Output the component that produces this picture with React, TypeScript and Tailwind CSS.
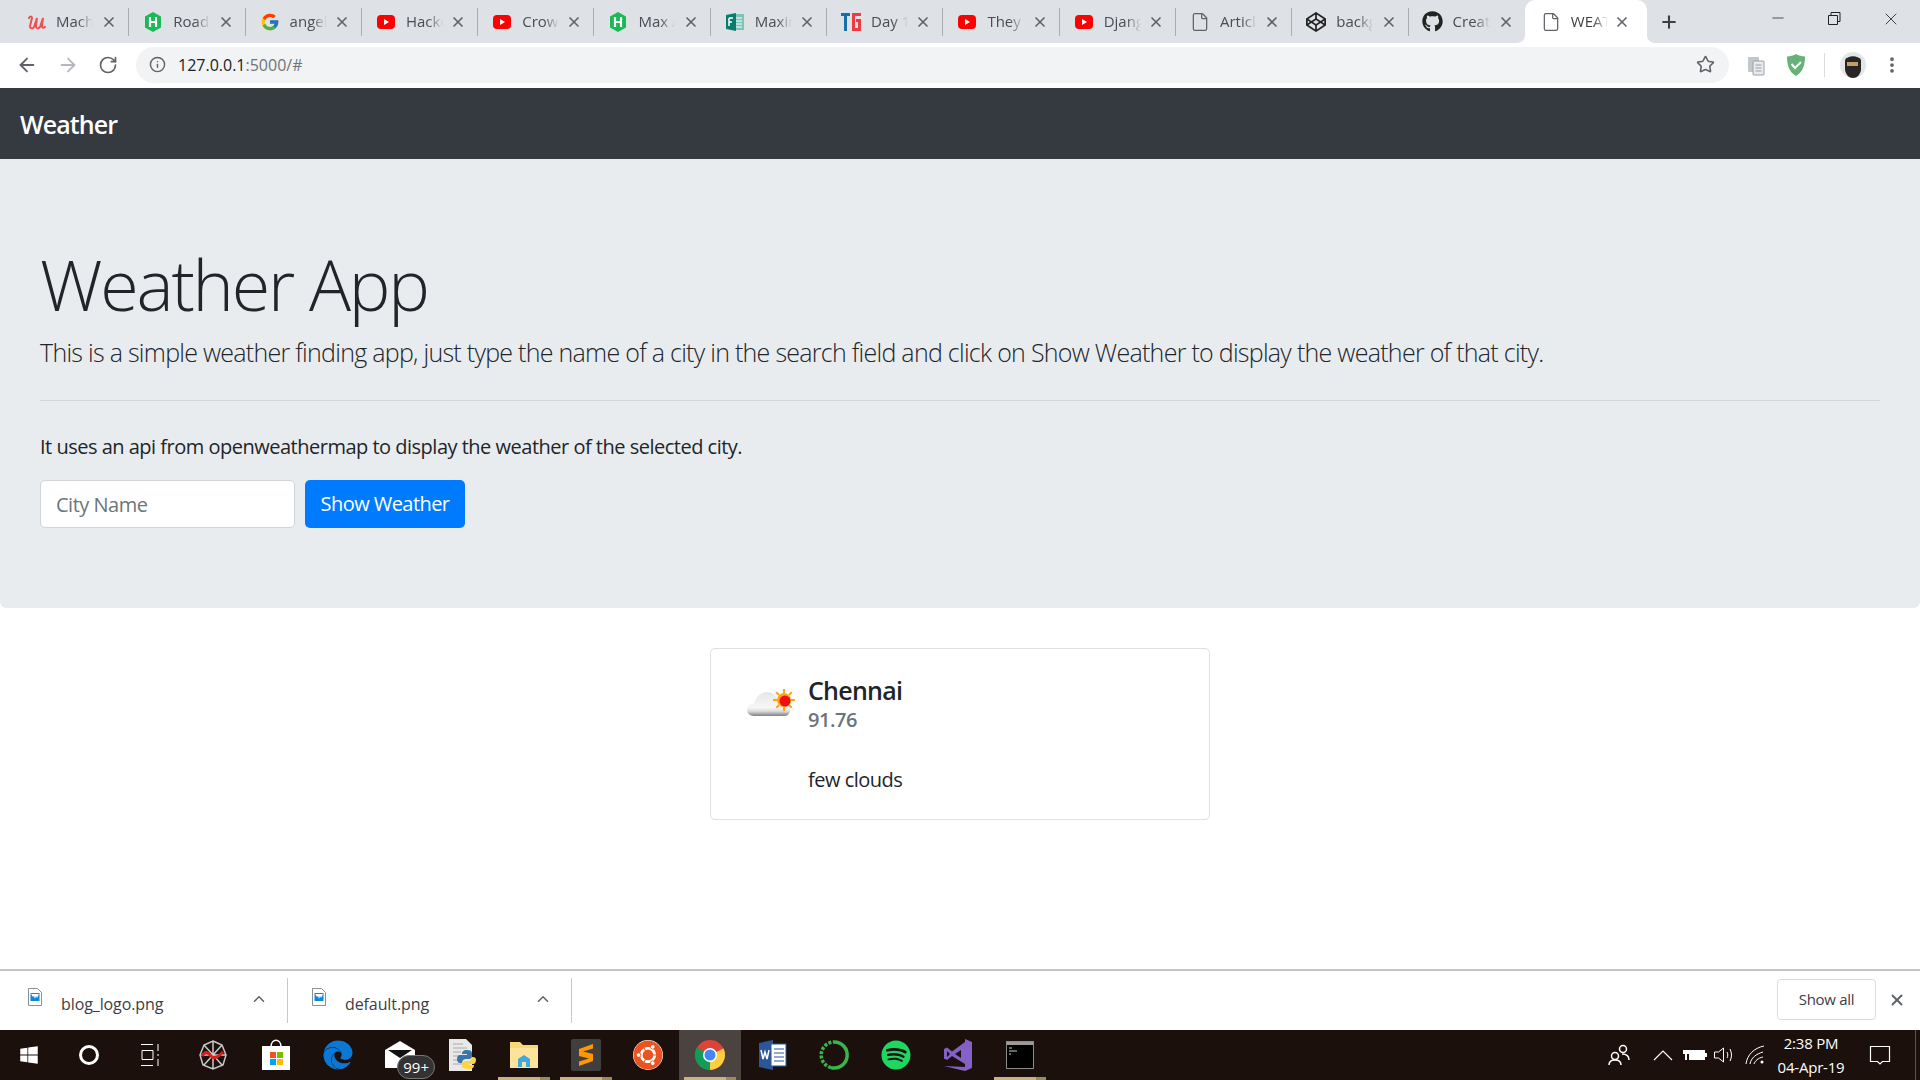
import { ArrowLeft, ArrowRight, ChevronUp, File, Info, Minus, MoreVertical, Plus, RotateCw, Star, X } from 'lucide-react';
import { FaCodepen, FaEdge, FaGithub, FaSpotify, FaUbuntu, FaWindows } from 'react-icons/fa';
import { FcGoogle } from 'react-icons/fc';
import type { ReactNode } from 'react';

const FONT = "font-['Open_Sans',sans-serif]";

function YouTubeIcon() {
  return (
    <svg width="20" height="20" viewBox="0 0 20 20">
      <rect x="1" y="3" width="18" height="14" rx="4" fill="#f00" />
      <path d="M8 7l5 3-5 3z" fill="#fff" />
    </svg>
  );
}

function HackerIcon() {
  return (
    <svg width="20" height="20" viewBox="0 0 20 20">
      <path d="M10 0l8 4.500v11L10 20l-8-4.500v-11z" fill="#19b955" />
      <path d="M7 5v10M13 5v10M7 10h6" stroke="#fff" strokeWidth="2.200" fill="none" />
    </svg>
  );
}

function UdemyIcon() {
  return (
    <svg width="20" height="20" viewBox="0 0 20 20">
      <path d="M3 6c1-2 3-2 3 0L4 14c0 3 3 3 4 1l3-9-1 8c0 3 2 3 4 1l3-9-1 8c0 2 1 2 3 1" stroke="#ec5252" strokeWidth="2" fill="none" strokeLinecap="round" />
    </svg>
  );
}

function FormsIcon() {
  return (
    <svg width="20" height="20" viewBox="0 0 20 20">
      <rect x="8" y="2" width="11" height="16" fill="#7fc4b8" />
      <path d="M11 6h6M11 9h6M11 12h6M11 15h6" stroke="#fff" strokeWidth="1" />
      <path d="M1 3l10-2v18L1 17z" fill="#0a7d6c" />
      <path d="M4 6h4M4 6v8M4 10h3" stroke="#fff" strokeWidth="1.500" fill="none" />
    </svg>
  );
}

function TgIcon() {
  return (
    <svg width="22" height="22" viewBox="0 0 22 22">
      <path d="M1 2h9v3H7v15H4V5H1z" fill="#156fa8" />
      <path d="M12 2h9v3h-6v12h3v-6h-2V8h5v12h-9z" fill="#ef3a42" />
    </svg>
  );
}

function PageIcon() {
  return <File size={20} strokeWidth={1.500} className="text-[#5f6368]" />;
}

const tabs: { title: string; icon: ReactNode }[] = [
  { title: 'Machine', icon: <UdemyIcon /> },
  { title: 'Roadside', icon: <HackerIcon /> },
  { title: 'angel', icon: <FcGoogle size={20} /> },
  { title: 'Hacker', icon: <YouTubeIcon /> },
  { title: 'Crowd', icon: <YouTubeIcon /> },
  { title: 'Max A', icon: <HackerIcon /> },
  { title: 'Maximum', icon: <FormsIcon /> },
  { title: 'Day 1', icon: <TgIcon /> },
  { title: 'They', icon: <YouTubeIcon /> },
  { title: 'Django', icon: <YouTubeIcon /> },
  { title: 'Article', icon: <PageIcon /> },
  { title: 'backg', icon: <FaCodepen size={20} className="text-[#222]" /> },
  { title: 'Create', icon: <FaGithub size={21} className="text-[#222]" /> },
];

function Tab({ title, icon, showDivider, first }: { title: string; icon: ReactNode; showDivider: boolean; first: boolean }) {
  return (
    <div className={`flex h-[28px] w-[116.300px] shrink-0 items-center pr-[11px] ${first ? 'pl-[12px]' : 'pl-[13px]'} ${showDivider ? 'border-r border-[#a9adb2]' : ''}`}>
      <span className="flex w-[22px] shrink-0 justify-center">{icon}</span>
      <span className="ml-[9px] w-[37px] overflow-hidden whitespace-nowrap text-[15px] text-[#4a4d51] [mask-image:linear-gradient(to_right,black_60%,transparent)]">
        {title}
      </span>
      <X size={16} strokeWidth={2.500} className="ml-auto text-[#5f6368]" />
    </div>
  );
}

function TabStrip() {
  return (
    <div className="flex h-[43px] shrink-0 items-start bg-[#dee1e6] pl-[13px]">
      <div className="flex h-[43px] items-center">
        {tabs.map((tab, i) => (
          <Tab key={i} title={tab.title} icon={tab.icon} showDivider={i < tabs.length - 1} first={i === 0} />
        ))}
      </div>
      <div className="relative flex h-[43px] w-[122px] shrink-0 items-center rounded-t-[10px] bg-white pl-[15px] pr-[17px]">
        <svg width="8" height="8" viewBox="0 0 8 8" className="absolute -left-[8px] bottom-0">
          <path d="M8 0v8H0c4 0 8-3 8-8z" fill="#fff" />
        </svg>
        <svg width="8" height="8" viewBox="0 0 8 8" className="absolute -right-[8px] bottom-0">
          <path d="M0 0v8h8C4 8 0 5 0 0z" fill="#fff" />
        </svg>
        <span className="flex w-[22px] shrink-0 justify-center"><PageIcon /></span>
        <span className="ml-[9px] w-[37px] overflow-hidden whitespace-nowrap text-[15px] text-[#3c4043] [mask-image:linear-gradient(to_right,black_60%,transparent)]">
          WEATHER
        </span>
        <X size={16} strokeWidth={2.500} className="ml-auto text-[#5f6368]" />
      </div>
      <div className="flex h-[43px] w-[45px] items-center justify-center">
        <Plus size={20} strokeWidth={2.500} className="text-[#3c4043]" />
      </div>
      <div className="ml-auto flex h-[43px] items-start pr-[1px] pt-[9px] text-[#222]">
        <span className="flex w-[56px] justify-center"><Minus size={18} strokeWidth={1} /></span>
        <span className="mr-[1px] flex w-[56px] justify-center">
          <svg width="18" height="18" viewBox="0 0 18 18" fill="none" stroke="currentColor">
            <path d="M3.500 6.500h9v9h-9zM6 6.500v-3h9v9h-2.500" />
          </svg>
        </span>
        <span className="flex w-[56px] justify-center"><X size={20} strokeWidth={1} /></span>
      </div>
    </div>
  );
}

function Toolbar() {
  return (
    <div className="flex h-[45px] shrink-0 items-center bg-white pb-[2px] pl-[16px] text-[#5f6368]">
      <ArrowLeft size={22} strokeWidth={2} />
      <ArrowRight size={22} strokeWidth={2} className="ml-[19px] text-[#b5b8bc]" />
      <RotateCw size={20} strokeWidth={2} className="ml-[19px]" />
      <div className="ml-[18px] flex h-[36px] w-[1593px] items-center rounded-full bg-[#f1f3f4] pl-[13px] pr-[14px]">
        <Info size={17} strokeWidth={2} />
        <span className="ml-[12px] text-[16px] text-[#202124]">
          127.0.0.1<span className="text-[#70757a]">:5000/#</span>
        </span>
        <Star size={19} strokeWidth={2} className="ml-auto" />
      </div>
      <svg width="20" height="22" viewBox="0 0 20 22" className="ml-[17px]" fill="none">
        <rect x="2" y="3" width="11" height="15" rx="1" fill="#c4c7ca" />
        <rect x="7" y="7" width="11" height="14" rx="1" fill="#e8eaed" stroke="#9aa0a6" />
        <path d="M9.500 11h6M9.500 14h6M9.500 17h6" stroke="#9aa0a6" />
      </svg>
      <svg width="20" height="24" viewBox="0 0 20 24" className="ml-[20px]">
        <path d="M10 1c3 2 6 2 9 2.500C19 12 17 19 10 23 3 19 1 12 1 3.500 4 3 7 3 10 1z" fill="#67b279" />
        <path d="M5.500 11l3.500 4 6-6" stroke="#fff" strokeWidth="2" fill="none" />
      </svg>
      <div className="ml-[18px] h-[24px] w-px bg-[#dadce0]" />
      <svg width="26" height="26" viewBox="0 0 26 26" className="ml-[15px]">
        <circle cx="13" cy="13" r="13" fill="#e4e5e6" />
        <path d="M5 8c3-5 13-5 16 0v10c-1 5-4 8-8 8s-7-3-8-8z" fill="#262626" />
        <rect x="7" y="10" width="11" height="4" fill="#c69c6d" />
      </svg>
      <MoreVertical size={20} strokeWidth={2.500} className="ml-[16px]" />
    </div>
  );
}

function CloudIcon() {
  return (
    <svg width="50" height="34" viewBox="0 0 50 34" className="shrink-0">
      <defs>
        <linearGradient id="cloud-fill" x1="0" y1="0" x2="0" y2="1">
          <stop offset="0" stopColor="#e6e6e6" />
          <stop offset="0.650" stopColor="#f7f7f7" />
          <stop offset="0.800" stopColor="#dcdcdc" />
          <stop offset="1" stopColor="#7f7f7f" />
        </linearGradient>
      </defs>
      <path d="M7 31c-4 0-7-3-7-6 0-4 3-7 7-6 1-7 7-12 13-12 6 0 10 4 11 10 6-1 12 2 12 8 0 3-2 6-5 6z" fill="url(#cloud-fill)" />
      <path d="M37 4v22M26 15h22M29.200 7.200l15.600 15.600M44.800 7.200L29.200 22.800" stroke="#ffa412" strokeWidth="2" strokeDasharray="4 14 4" />
      <circle cx="37" cy="15" r="7" fill="#ffa412" />
      <circle cx="38" cy="16" r="5.500" fill="#f01010" />
    </svg>
  );
}

function Navbar() {
  return (
    <nav className="flex h-[71px] shrink-0 items-center bg-[#343a40] px-[20px] pt-[2px]">
      <span className="text-[25px] font-semibold tracking-[-0.900px] text-white">Weather</span>
    </nav>
  );
}

function Hero() {
  return (
    <section className="h-[449px] shrink-0 rounded-b-[6px] bg-[#e9ecef] px-[40px] pt-[78px] text-[#212529]">
      <h1 className="text-[70px] font-light leading-[94px] tracking-[-2.200px]">Weather App</h1>
      <p className="mt-[3px] text-[25px] font-light leading-[36px] tracking-[-0.725px]">
        This is a simple weather finding app, just type the name of a city in the search field and click on Show Weather to display the weather of that city.
      </p>
      <hr className="mt-[30px] border-[#d3d5d8]" />
      <p className="mt-[31px] text-[20px] leading-[30px] tracking-[-0.500px]">
        It uses an api from openweathermap to display the weather of the selected city.
      </p>
      <div className="mt-[18px] flex gap-[10px]">
        <input
          placeholder="City Name"
          className="h-[48px] w-[255px] rounded-[5px] border border-[#ced4da] bg-white px-[15px] text-[20px] tracking-[-0.500px] placeholder:text-[#6c757d]"
        />
        <button className="h-[48px] w-[160px] rounded-[5px] bg-[#007bff] text-[20px] tracking-[-0.550px] text-white">
          Show Weather
        </button>
      </div>
    </section>
  );
}

function WeatherCard() {
  return (
    <div className="mx-auto mt-[40px] flex h-[172px] w-[500px] rounded-[5px] border border-[#dfdfdf] bg-white pl-[36px] pt-[23px] text-[#212529]">
      <div className="pt-[13px]"><CloudIcon /></div>
      <div className="ml-[11px]">
        <div className="text-[25px] leading-[36px] tracking-[-0.750px] [font-weight:550]">Chennai</div>
        <div className="text-[20px] leading-[24px] tracking-[-0.450px] text-[#6c757d] [font-weight:550]">91.76</div>
        <div className="mt-[33px] text-[20px] leading-[30px] tracking-[-0.500px]">few clouds</div>
      </div>
    </div>
  );
}

function DownloadItem({ name, className }: { name: string; className: string }) {
  return (
    <div className={`flex h-[45px] items-center border-r border-[#c8c8c8] ${className}`}>
      <svg width="14" height="18" viewBox="0 0 14 18" className="-mt-[8px]">
        <path d="M.500.500h9l4 4v13H.500z" fill="#fff" stroke="#8a8f95" />
        <rect x="2.500" y="5" width="9" height="8" fill="#0f86d8" />
        <path d="M3 6h8l-2 4-1-2-1 3-1-3-1 1z" fill="#fff" />
      </svg>
      <span className="ml-[19px] mt-[7px] text-[16px] tracking-[-0.100px] text-[#3c4043]">{name}</span>
      <ChevronUp size={18} strokeWidth={2} className="ml-auto mr-[19px] -mt-[3px] text-[#5f6368]" />
    </div>
  );
}

function DownloadBar() {
  return (
    <div className="flex h-[61px] shrink-0 items-center border-t-2 border-[#c4c4c4] bg-white">
      <DownloadItem name="blog_logo.png" className="w-[288px] pl-[28px]" />
      <DownloadItem name="default.png" className="w-[284px] pl-[24px]" />
      <button className="-mt-[2px] ml-auto flex h-[41px] w-[99px] items-center justify-center rounded-[4px] border border-[#dadce0] text-[15px] tracking-[-0.300px] text-[#3c4043]">
        Show all
      </button>
      <X size={18} strokeWidth={2.500} className="-mt-[2px] ml-[12px] mr-[14px] text-[#5f6368]" />
    </div>
  );
}

function TaskbarSlot({ children, underline, active, className = 'w-[62px]' }: { children: ReactNode; underline?: boolean; active?: boolean; className?: string }) {
  return (
    <div className={`relative flex h-[50px] shrink-0 items-center justify-center ${className} ${active ? 'bg-[#4a4340]' : ''}`}>
      {children}
      {underline && (
        <div className="absolute bottom-0 left-[5px] right-[5px] flex h-[3px]">
          <div className="flex-1 bg-[#c9b27c]" />
          <div className="w-[10px] bg-[#9a8a60]" />
        </div>
      )}
    </div>
  );
}

function Taskbar() {
  return (
    <div className="flex h-[50px] shrink-0 items-center bg-[#1c100c] text-white">
      <TaskbarSlot className="w-[58px]"><FaWindows size={20} /></TaskbarSlot>
      <TaskbarSlot className="w-[62px]"><div className="h-[20px] w-[20px] rounded-full border-[3px] border-white" /></TaskbarSlot>
      <TaskbarSlot className="mr-[3px] w-[59px]">
        <svg width="20" height="24" viewBox="0 0 20 24" fill="none" stroke="#fff">
          <path d="M1 1.500h12M1 22.500h12M2 7.500h11v9H2zM18 1v7M18 16v7M18 11v2" />
        </svg>
      </TaskbarSlot>
      <TaskbarSlot className="mr-[1px] w-[62px]">
        <svg width="30" height="30" viewBox="0 0 30 30" fill="none" stroke="#c9c9c9" strokeWidth="1.500">
          <path d="M15 1l9 4 4 10-3 10-10 4-10-4-3-10 4-10zM15 1v28M2 15h26M6 5l18 20M24 5L6 25" />
          <path d="M4 16c4-6 6-3 9 0s6 2 12-4" stroke="#e01b1b" strokeWidth="3" />
        </svg>
      </TaskbarSlot>
      <TaskbarSlot>
        <svg width="30" height="32" viewBox="0 0 30 32">
          <path d="M10 8c0-9 10-9 10 0" fill="none" stroke="#fff" strokeWidth="1.500" />
          <rect x="1" y="7" width="28" height="24" fill="#fff" />
          <rect x="9" y="13" width="6" height="6" fill="#f25022" />
          <rect x="16" y="13" width="6" height="6" fill="#7fba00" />
          <rect x="9" y="20" width="6" height="6" fill="#00a4ef" />
          <rect x="16" y="20" width="6" height="6" fill="#ffb900" />
        </svg>
      </TaskbarSlot>
      <TaskbarSlot><FaEdge size={30} className="text-[#0a78d4]" /></TaskbarSlot>
      <TaskbarSlot>
        <div className="relative">
          <svg width="30" height="30" viewBox="0 0 30 30">
            <path d="M0 10L15 1l15 9v18H0z" fill="#fff" />
            <path d="M3 10h24l-12 8z" fill="#111" />
          </svg>
          <span className="absolute -bottom-[9px] -right-[20px] rounded-full border border-[#777] bg-[#333] px-[5px] text-[15px] leading-[22px] text-white">
            99+
          </span>
        </div>
      </TaskbarSlot>
      <TaskbarSlot>
        <svg width="28" height="34" viewBox="0 0 28 34">
          <path d="M1 1h17l6 6v26H1z" fill="#e8e8e8" />
          <path d="M5 6h10M5 10h14M5 14h8M5 18h8M5 22h8M5 26h12" stroke="#aaa" />
          <path d="M19 12c-4 0-5 2-5 4h5v1h-7c-2 0-3 2-3 4s1 4 3 4h2c0-3 2-4 4-4h3c2 0 3-1 3-3v-3c0-2-2-3-5-3z" fill="#3776ab" />
          <path d="M21 31c4 0 5-2 5-4h-5v-1h4c2 0 3-2 3-4s-1-3-3-3h-1c0 3-2 4-4 4h-3c-2 0-3 1-3 3v2c0 2 3 3 7 3z" fill="#ffd343" />
        </svg>
      </TaskbarSlot>
      <TaskbarSlot underline>
        <svg width="30" height="28" viewBox="0 0 30 28">
          <path d="M1 1h10l3 3h15v22H1z" fill="#f8d775" />
          <rect x="1" y="7" width="28" height="20" fill="#fbe39a" />
          <path d="M9 26v-8l6-4 6 4v8h-4v-5h-4v5z" fill="#3fa9e0" />
        </svg>
      </TaskbarSlot>
      <TaskbarSlot underline>
        <svg width="30" height="32" viewBox="0 0 30 32">
          <rect width="30" height="32" rx="2" fill="#3f3f3f" />
          <path d="M22 5L8 10v5l14 5v-5L12 12.500l10-3zM8 27l14-5v-5L8 12v5l10 2.500-10 3z" fill="#ff9800" />
        </svg>
      </TaskbarSlot>
      <TaskbarSlot><FaUbuntu size={30} className="rounded-full bg-white text-[#e95420]" /></TaskbarSlot>
      <TaskbarSlot active underline>
        <svg width="30" height="30" viewBox="0 0 30 30">
          <circle cx="15" cy="15" r="15" fill="#db4437" />
          <path d="M15 15L28.500 8.500A15 15 0 0 1 15 30z" fill="#ffcd40" />
          <path d="M15 15v15A15 15 0 0 1 2 7.500z" fill="#0f9d58" />
          <circle cx="15" cy="15" r="7" fill="#fff" />
          <circle cx="15" cy="15" r="5.500" fill="#4285f4" />
        </svg>
      </TaskbarSlot>
      <TaskbarSlot>
        <svg width="30" height="32" viewBox="0 0 30 32">
          <path d="M2 4l14-3v30L2 28z" fill="#2b579a" />
          <rect x="14" y="5" width="15" height="22" fill="#fff" stroke="#2b579a" />
          <path d="M17 10h10M17 14h10M17 18h10M17 22h10" stroke="#2b579a" />
          <path d="M4 11l2 9 2-7 2 7 2-9" stroke="#fff" strokeWidth="1.500" fill="none" />
        </svg>
      </TaskbarSlot>
      <TaskbarSlot>
        <svg width="32" height="32" viewBox="0 0 32 32" fill="none">
          <path d="M16 3a13 13 0 1 1-3 25.600" stroke="#39b54a" strokeWidth="3.500" />
          <path d="M13 28.600A13 13 0 0 1 16 3" stroke="#39b54a" strokeWidth="3.500" strokeDasharray="3 1.500" />
        </svg>
      </TaskbarSlot>
      <TaskbarSlot><FaSpotify size={30} className="text-[#1ed760]" /></TaskbarSlot>
      <TaskbarSlot>
        <svg width="30" height="34" viewBox="0 0 30 34">
          <path d="M22 1l7 3v26l-7 3L1 28l21 1z" fill="#8661c5" />
          <path d="M1 11l3-1.500 5 4L22 4v22L9 18l-5 4-3-1.500zM4 13v6l3-3zM12 16l6 4v-8z" fill="#8661c5" fillRule="evenodd" />
        </svg>
      </TaskbarSlot>
      <TaskbarSlot underline>
        <svg width="28" height="28" viewBox="0 0 28 28">
          <rect x="0.500" y="0.500" width="27" height="27" fill="#000" stroke="#8a8a8a" />
          <rect x="1" y="1" width="26" height="3" fill="#9a9a9a" />
          <path d="M3 7h3M3 10h8M3 13h2" stroke="#ccc" />
        </svg>
      </TaskbarSlot>

      <div className="ml-auto flex h-full items-center">
        <svg width="24" height="24" viewBox="0 0 24 24" fill="none" stroke="#fff" strokeWidth="1.500">
          <circle cx="8" cy="13" r="3.500" />
          <circle cx="16" cy="6" r="3.500" />
          <path d="M2 22c0-3 2-5 6-5s6 2 6 5M15 11c4 0 7 2 7 6" />
        </svg>
        <svg width="20" height="12" viewBox="0 0 20 12" fill="none" stroke="#fff" strokeWidth="1.200" className="ml-[22px]">
          <path d="M1 11l9-9 9 9" />
        </svg>
        <svg width="24" height="14" viewBox="0 0 24 14" className="ml-[10px]">
          <rect x="6" y="2" width="16" height="10" fill="#fff" />
          <rect x="22" y="5" width="2" height="4" fill="#fff" />
          <path d="M0 2h6v4H4v6H2V6H0z" fill="#fff" />
        </svg>
        <svg width="24" height="20" viewBox="0 0 24 20" fill="none" stroke="#fff" className="ml-[6px]">
          <path d="M1.500 7h4l5-4v14l-5-4h-4zM14 7c1 2 1 4 0 6M17 4c2 4 2 8 0 12" />
        </svg>
        <svg width="22" height="20" viewBox="0 0 22 20" fill="none" stroke="#fff" className="ml-[7px]">
          <path d="M2 19C3 10 10 3 20 1M6 19c1-6 6-10 13-12M10 19c1-3 4-6 9-7" />
          <circle cx="18" cy="17" r="1.500" fill="#fff" stroke="none" />
        </svg>
        <div className="ml-[3px] w-[84px] text-center text-[15px] leading-[24px] tracking-[-0.200px]">
          <div>2:38 PM</div>
          <div>04-Apr-19</div>
        </div>
        <svg width="22" height="22" viewBox="0 0 22 22" fill="none" stroke="#fff" strokeWidth="1.200" className="ml-[16px] mr-[24px]">
          <path d="M1.500 2.500h19v15h-7l-2.500 2.500-2.500-2.500h-7z" />
        </svg>
        <div className="h-full w-[5px] border-l border-[#5a5350]" />
      </div>
    </div>
  );
}

export default function App() {
  return (
    <div className={`flex h-screen w-full flex-col overflow-hidden bg-white ${FONT}`}>
      <TabStrip />
      <Toolbar />
      <Navbar />
      <main className="min-h-0 flex-1">
        <Hero />
        <WeatherCard />
      </main>
      <DownloadBar />
      <Taskbar />
    </div>
  );
}
